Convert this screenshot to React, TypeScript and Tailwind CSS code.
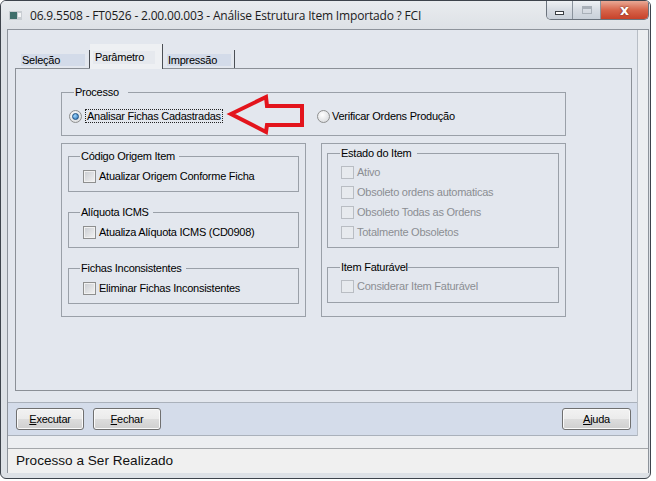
import clsx from "clsx";
import type { ReactNode } from "react";

/**
 * "Análise Estrutura Item Importado ? FCI" dialog — Parâmetro tab.
 * Win7-style frame, tab panel with group boxes, button bar and status bar.
 */
export default function App() {
  return (
    <div className="relative h-[481px] w-[656px] bg-white font-['Liberation_Sans',Arial,sans-serif] text-[11px] tracking-[-0.25px] text-black">
      <div className="flex h-[479px] w-[651px] flex-col overflow-hidden rounded-[6px] border border-[#3e444c] bg-[#dde1e6]">
        <TitleBar />
        <div className="flex flex-1 flex-col pb-[5px] pl-[6px] pr-[1px]">
          <div className="flex flex-1 flex-col border border-b-0 border-[#8d939b] bg-[#eceef1]">
            <div className="flex">
              <MainPanel />
              <div className="flex-1" />
            </div>
            <div className="h-[12px]" />
            <div className="flex flex-1 items-center border-t border-[#a3a6aa] bg-[#f0f0f0] pl-[8px] text-[13.6px] tracking-normal text-[#111]">
              Processo a Ser Realizado
            </div>
          </div>
        </div>
      </div>
      <Arrow />
    </div>
  );
}

function TitleBar() {
  return (
    <div className="flex h-[28px] items-start bg-[linear-gradient(#e9ecef,#dde1e6)]">
      <svg className="ml-[8px] mt-[10px]" width="13" height="9" viewBox="0 0 13 9">
        <rect x="0" y="0" width="13" height="9" fill="#c9ced3" />
        <rect x="1" y="1" width="7" height="7" fill="#3f6f6c" />
        <rect x="9" y="2" width="3" height="4" fill="#f4f6f7" />
      </svg>
      <span className="ml-[8px] mt-[7px] font-['Open_Sans',sans-serif] text-[12px] leading-[16px] tracking-[-0.18px] text-[#1b1b1b]">
        06.9.5508 - FT0526 - 2.00.00.003 - Análise Estrutura Item Importado ? FCI
      </span>
      <div className="ml-auto mr-[1px] flex h-[19px] overflow-hidden rounded-b-[5px] border border-t-0 border-[#6b737d]">
        <div className="flex w-[26px] items-center justify-center border-r border-[#8a929c] bg-[linear-gradient(#eef1f4,#d7dce3_50%,#c9d0d9)]">
          <span className="mt-[5px] h-[4px] w-[9px] border border-[#3b3f44] bg-white" />
        </div>
        <div className="flex w-[28px] items-center justify-center border-r border-[#8a929c] bg-[linear-gradient(#eef1f4,#d7dce3_50%,#c9d0d9)]">
          <span className="h-[8px] w-[10px] border border-[#a9b0b8] shadow-[inset_0_2px_0_#a9b0b8]" />
        </div>
        <div className="flex w-[47px] items-center justify-center bg-[linear-gradient(#e9a995,#d7654b_50%,#c7422a)]">
          <span className="font-['DejaVu_Sans',sans-serif] text-[14px] font-bold leading-none text-white [text-shadow:0_0_2px_#5a1a10]">
            x
          </span>
        </div>
      </div>
    </div>
  );
}

function MainPanel() {
  return (
    <div className="w-[630px] border-r border-[#b8bec6] bg-[#e3e7ee] pt-[14px]">
      <div className="relative z-10 flex h-[24px] items-end pl-[9px]">
        <Tab label="Seleção" width="w-[73px]" />
        <div className="-mb-px h-[25px] w-[73px] border-r border-[#4b4f55] bg-[#eef0f3] pl-[3px] pt-[7px]">
          <div className="h-[13px] w-[62px] bg-[#e6e9ee] pl-[2px] leading-[13px]">Parâmetro</div>
        </div>
        <Tab label="Impressão" width="w-[72px]" />
      </div>
      <div className="ml-[7px] h-[323px] w-[617px] border border-[#8b9097] pl-[45px] pt-[17px]">
        <fieldset className="h-[50px] w-[505px] border border-[#9aa0a8]">
          <legend className="ml-[12px] pl-[1px] pr-[9px] leading-[13px]">Processo</legend>
          <div className="mt-[7px] flex h-[20px] items-center pl-[7px]">
            <div className="flex w-[248px] items-center">
              <Radio checked />
              <span className="ml-[3px] border border-dotted border-[#222] px-px leading-[12px]">
                Analisar Fichas Cadastradas
              </span>
            </div>
            <Radio />
            <span className="ml-[2px]">Verificar Ordens Produção</span>
          </div>
        </fieldset>
        <div className="mt-[7px] flex gap-[15px]">
          <div className="flex h-[174px] w-[245px] flex-col gap-[14px] border border-[#9aa0a8] pl-[6px] pt-[6px]">
            <Group title="Código Origem Item">
              <Check label="Atualizar Origem Conforme Ficha" />
            </Group>
            <Group title="Alíquota ICMS">
              <Check label="Atualiza Alíquota ICMS (CD0908)" />
            </Group>
            <Group title="Fichas Inconsistentes">
              <Check label="Eliminar Fichas Inconsistentes" />
            </Group>
          </div>
          <div className="flex h-[174px] w-[245px] flex-col gap-[13px] border border-[#9aa0a8] pl-[5px] pt-[3px]">
            <fieldset className="h-[101px] w-[232px] border border-[#9aa0a8] pl-[13px] pt-[2px]">
              <legend className="-ml-[1px] pl-[1px] pr-[5px] leading-[13px]">Estado do Item</legend>
              {["Ativo", "Obsoleto ordens automaticas", "Obsoleto Todas as Ordens", "Totalmente Obsoletos"].map((l) => (
                <div key={l} className="flex h-[20px] items-center">
                  <Box disabled />
                  <span className="ml-[3px] text-[#8b8e93]">{l}</span>
                </div>
              ))}
            </fieldset>
            <fieldset className="h-[42px] w-[232px] border border-[#9aa0a8] pl-[13px] pt-[5px]">
              <legend className="-ml-[1px] pl-[1px] leading-[13px]">Item Faturável</legend>
              <div className="flex h-[14px] items-center">
                <Box disabled />
                <span className="ml-[3px] text-[#8b8e93]">Considerar Item Faturável</span>
              </div>
            </fieldset>
          </div>
        </div>
      </div>
      <div className="mt-[11px] flex h-[34px] items-center border-y border-[#aab1bb] bg-[#d4dcea] pl-[8px] pr-[6px]">
        <Button w="w-[68px]" k="E" rest="xecutar" />
        <div className="ml-[9px]">
          <Button w="w-[68px]" k="F" rest="echar" />
        </div>
        <div className="ml-auto">
          <Button w="w-[69px]" k="A" rest="juda" />
        </div>
      </div>
    </div>
  );
}

function Tab({ label, width }: { label: string; width: string }) {
  return (
    <div className={clsx("h-[18px] border-r border-[#4b4f55] pl-[4px] pt-[4px]", width)}>
      <div className="h-[12px] w-[64px] bg-[#d3dbe9] pl-px leading-[13px]">{label}</div>
    </div>
  );
}

function Group({ title, children }: { title: string; children: ReactNode }) {
  return (
    <fieldset className="h-[42px] w-[231px] border border-[#9aa0a8] pl-[14px] pt-[6px]">
      <legend className="-ml-[3px] pl-[1px] pr-[4px] leading-[13px]">{title}</legend>
      {children}
    </fieldset>
  );
}

function Check({ label }: { label: string }) {
  return (
    <div className="flex h-[14px] items-center">
      <Box />
      <span className="ml-[3px]">{label}</span>
    </div>
  );
}

function Box({ disabled }: { disabled?: boolean }) {
  return (
    <span
      className={clsx(
        "h-[13px] w-[13px] shrink-0 border",
        disabled
          ? "border-[#b9bdc3] bg-[#e7eaee]"
          : "border-[#8e8f8f] bg-[linear-gradient(135deg,#c9ccd1,#f3f3f3)] shadow-[inset_0_0_0_1px_#f1f1f1]"
      )}
    />
  );
}

function Radio({ checked }: { checked?: boolean }) {
  return (
    <span className="flex h-[13px] w-[13px] shrink-0 items-center justify-center rounded-full border border-[#8e8f8f] bg-[radial-gradient(circle_at_40%_35%,#ffffff,#d2d4d7)]">
      {checked && (
        <span className="h-[7px] w-[7px] rounded-full border border-[#1c4f80] bg-[radial-gradient(circle_at_35%_35%,#9cd6ff,#2a6db0)]" />
      )}
    </span>
  );
}

function Button({ w, k, rest }: { w: string; k: string; rest: string }) {
  return (
    <button
      className={clsx(
        "h-[22px] rounded-[3px] border border-[#707070] bg-[linear-gradient(#f2f2f2,#ebebeb_50%,#dddddd_50%,#cfcfcf)] text-[11px] text-black shadow-[inset_0_0_0_1px_#fafafa]",
        w
      )}
    >
      <span className="underline">{k}</span>
      {rest}
    </button>
  );
}

function Arrow() {
  return (
    <svg className="pointer-events-none absolute left-[223px] top-[91px]" width="86" height="48" viewBox="0 0 86 48">
      <polygon
        points="8,23 43,6 44,15 79,15 79,34 44,34 43,41"
        fill="none"
        stroke="#e3141c"
        strokeWidth="4"
        strokeLinejoin="miter"
      />
    </svg>
  );
}
